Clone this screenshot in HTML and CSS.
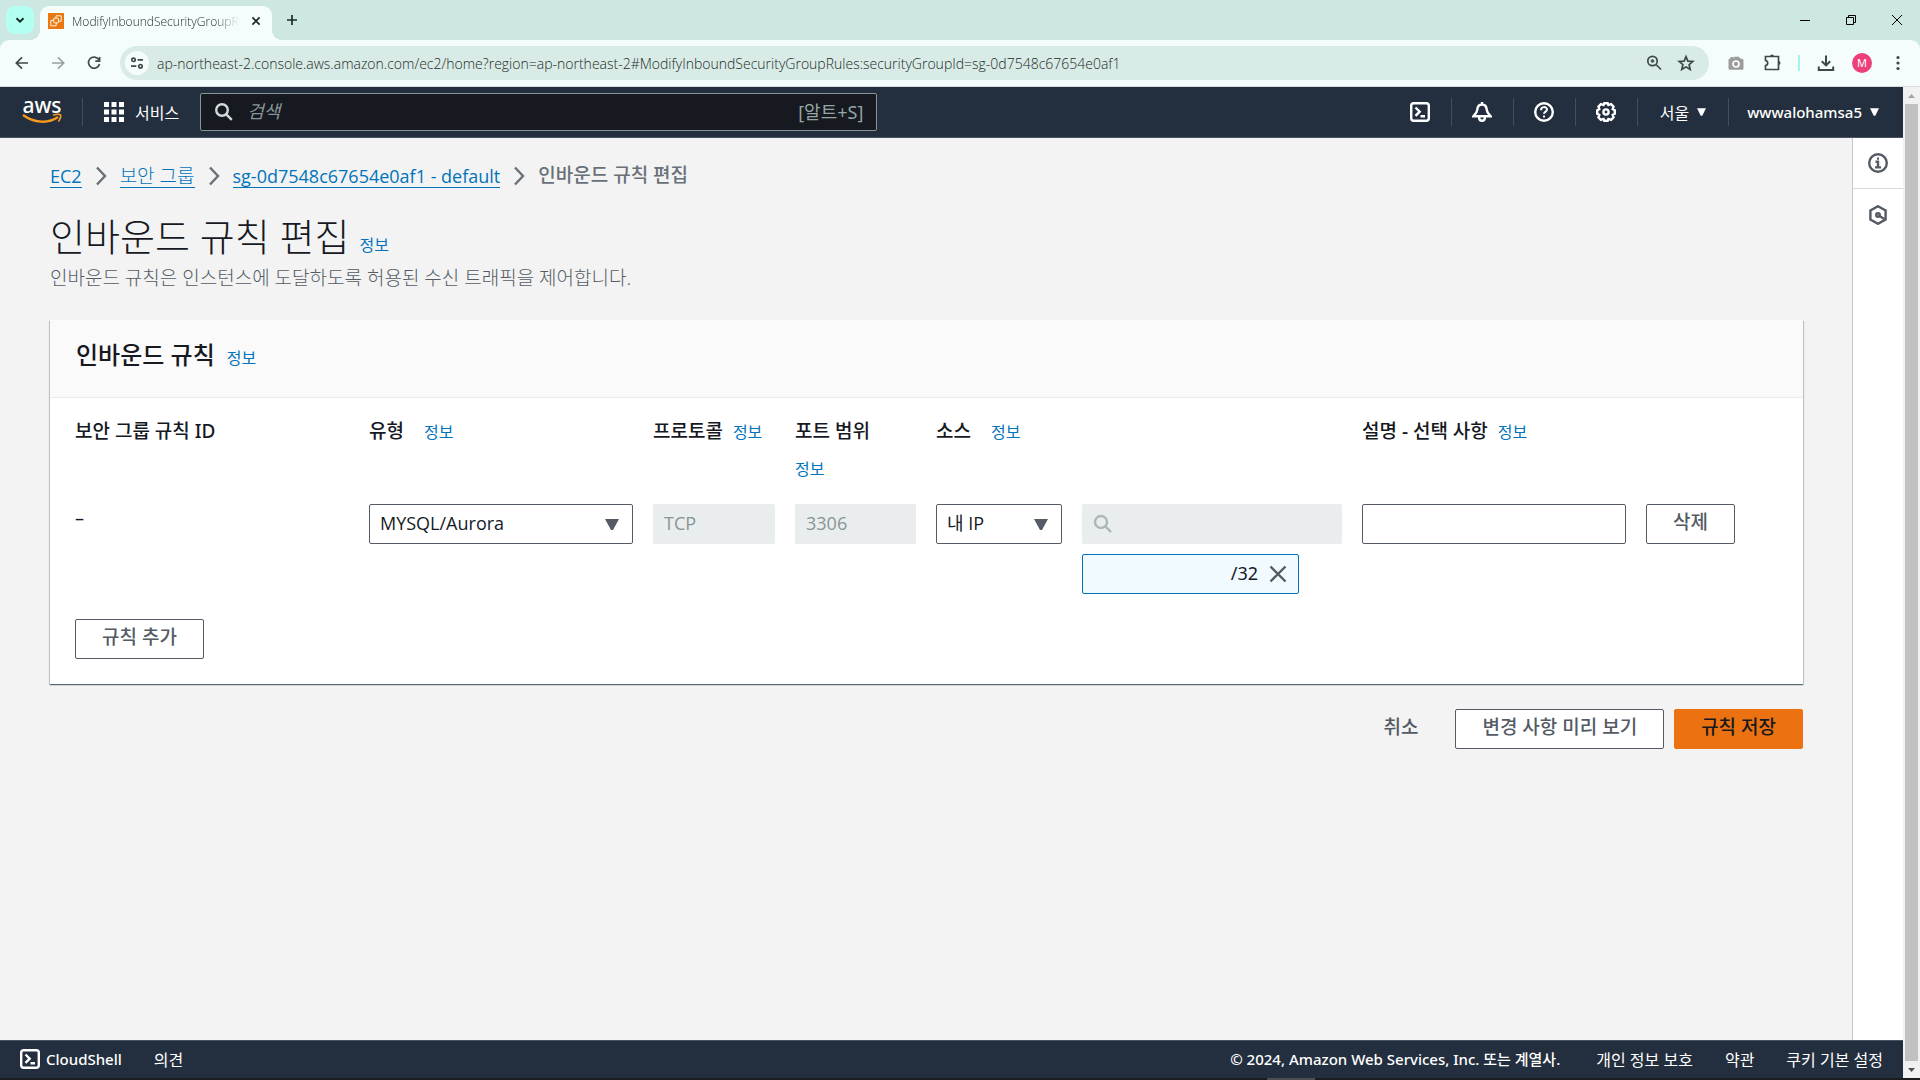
FILE: index.html
```html
<!DOCTYPE html>
<html lang="ko">
<head>
    <meta charset="UTF-8">
    <title>ModifyInboundSecurityGroupRules</title>
    <link rel="stylesheet" href="styles.css">
</head>
<body>
<div class="tabstrip">
    <button class="tab_search" aria-label="탭 검색">
        <svg class="icon_sm" viewBox="0 0 16 16"><path d="M4.5 6.2L8 9.7l3.5-3.5"></path></svg>
    </button>
    <div class="tab">
        <svg class="favicon" viewBox="0 0 16 16">
            <rect width="16" height="16" fill="#e8780f"></rect>
            <g fill="none" stroke="#fff" stroke-width=".9">
                <rect x="5.8" y="5.2" width="4.6" height="4.6" rx=".5"></rect>
                <path d="M8 5V2.8h5.2v5.4h-2.6M5.6 7.4H2.8v5.4h5.4V10"></path>
            </g>
        </svg>
        <span class="tab_title">ModifyInboundSecurityGroupR</span>
        <button class="tab_close" aria-label="닫기">
            <svg class="icon_sm" viewBox="0 0 16 16"><path d="M4.4 4.4l7.2 7.2M11.6 4.4l-7.2 7.2"></path></svg>
        </button>
    </div>
    <button class="tab_new" aria-label="새 탭">
        <svg class="icon_sm" viewBox="0 0 16 16"><path d="M8 3v10M3 8h10"></path></svg>
    </button>
    <div class="window_controls">
        <button aria-label="최소화"><svg viewBox="0 0 12 12"><path d="M1 6.5h10"></path></svg></button>
        <button aria-label="이전 크기로"><svg viewBox="0 0 12 12"><path d="M1.5 3.5h7v7h-7zM3.5 3.5v-2h7v7h-2"></path></svg></button>
        <button aria-label="창 닫기"><svg viewBox="0 0 12 12"><path d="M1 1l10 10M11 1L1 11"></path></svg></button>
    </div>
</div>

<div class="toolbar">
    <div class="toolbar_nav">
        <button aria-label="뒤로"><svg class="icon" viewBox="0 0 20 20"><path d="M16 10H4.5M10 4.3L4.3 10l5.7 5.7"></path></svg></button>
        <button class="disabled" aria-label="앞으로"><svg class="icon" viewBox="0 0 20 20"><path d="M4 10h11.500M10 4.300l5.700 5.700-5.700 5.700"></path></svg></button>
        <button aria-label="새로고침"><svg class="icon" viewBox="0 0 20 20"><path d="M14.800 6.600A5.600 5.600 0 1 0 15.500 11M15.600 4v4.200h-4.300"></path></svg></button>
    </div>
    <div class="address">
        <button class="site_info" aria-label="사이트 정보">
            <svg class="icon_sm" viewBox="0 0 16 16"><circle cx="4.500" cy="4.800" r="1.700"></circle><path d="M8.600 4.800H14M2 11.200h5.400"></path><circle cx="11.500" cy="11.200" r="1.700"></circle></svg>
        </button>
        <input class="url" type="text" aria-label="주소" value="ap-northeast-2.console.aws.amazon.com/ec2/home?region=ap-northeast-2#ModifyInboundSecurityGroupRules:securityGroupId=sg-0d7548c67654e0af1">
        <button aria-label="확대"><svg class="icon" viewBox="0 0 20 20"><circle cx="8.500" cy="8" r="4.700"></circle><path d="M12 11.500l5 5M6.700 8h3.600M8.500 6.200v3.600"></path></svg></button>
        <button aria-label="북마크"><svg class="icon" viewBox="0 0 20 20"><path d="M10 3.600l1.900 4.500 4.900.4-3.700 3.200 1.100 4.800L10 13.900l-4.200 2.600 1.100-4.800-3.700-3.200 4.900-.4z"></path></svg></button>
    </div>
    <div class="toolbar_actions">
        <button class="camera" aria-label="캡처"><svg class="icon" viewBox="0 0 20 20"><path fill="#9a9d9c" stroke="none" d="M4.500 5.500V4H7v1.500l1-1.700h5l1.300 2H16a1.500 1.500 0 0 1 1.500 1.500v8a1.500 1.500 0 0 1-1.500 1.500H4a1.500 1.500 0 0 1-1.500-1.500v-8A1.500 1.500 0 0 1 4 5.500z"></path><circle cx="10" cy="11" r="3" stroke="#fff"></circle></svg></button>
        <button aria-label="확장 프로그램"><svg class="icon" viewBox="0 0 20 20"><path d="M3.500 3.500h13v13h-13v-4c2.900-.2 2.900-4.800 0-5z"></path><path fill="#3b4a46" stroke="none" d="M8 3.500a2 2 0 0 1 4 0zM16.500 8a2 2 0 0 1 0 4z"></path></svg></button>
        <span class="toolbar_line"></span>
        <button aria-label="다운로드"><svg class="icon" viewBox="0 0 20 20"><path stroke-width="2" d="M10 2.500v9.700M5.800 8.200l4.200 4.200 4.200-4.200M2.800 13.500V17h14.400v-3.500"></path></svg></button>
        <button class="profile">M</button>
        <button class="more" aria-label="메뉴"><svg class="icon" viewBox="0 0 20 20"><g fill="#3b4a46" stroke="none"><circle cx="10" cy="4.500" r="1.600"></circle><circle cx="10" cy="10" r="1.600"></circle><circle cx="10" cy="15.500" r="1.600"></circle></g></svg></button>
    </div>
</div>

<div class="viewport">
    <div class="page">
        <header class="navbar">
            <a class="logo" href="#" aria-label="aws">
                <span class="logo_text">aws</span>
                <svg class="logo_smile" viewBox="0 0 40 10"><path d="M1 1c11 8 25 9 35 2" fill="none" stroke="#f79a1e" stroke-width="2.400"></path><path d="M31 1.200c3-1 6-1.200 7.300-.4.900 1.200 0 4.500-2 6.700" fill="none" stroke="#f79a1e" stroke-width="1.700"></path></svg>
            </a>
            <button class="services">
                <svg class="icon" viewBox="0 0 20 20"><path fill="#fff" stroke="none" d="M0 0h5v5H0zM7.500 0h5v5h-5zM15 0h5v5h-5zM0 7.500h5v5H0zM7.500 7.500h5v5h-5zM15 7.500h5v5h-5zM0 15h5v5H0zM7.500 15h5v5h-5zM15 15h5v5h-5z"></path></svg>
                서비스
            </button>
            <div class="search">
                <svg class="icon" viewBox="0 0 20 20"><circle cx="8" cy="8" r="5.800"></circle><path d="M12.300 12.300l5.500 5.500"></path></svg>
                <input type="search" placeholder="검색" aria-label="검색">
                <span class="shortcut">[알트+S]</span>
            </div>
            <div class="nav_right">
                <button class="nav_icon" aria-label="CloudShell"><svg class="icon" viewBox="0 0 20 20"><rect x="1.200" y="1.200" width="17.600" height="17.600" rx="2.500"></rect><path d="M5.500 5.500l4.200 4.200-4.200 4.200M10.500 14.200H15"></path></svg></button>
                <button class="nav_icon" aria-label="알림"><svg class="icon" viewBox="0 0 20 20"><path d="M10 0v3M10 2.500c-3.500 0-4.500 2.700-4.700 5.200-.2 2.500-1.400 4.300-3.800 6.500h17c-2.400-2.200-3.600-4-3.800-6.500C14.500 5.200 13.500 2.500 10 2.500zM7 15c0 5 6 5 6 0"></path></svg></button>
                <button class="nav_icon" aria-label="도움말"><svg class="icon" viewBox="0 0 20 20"><circle cx="10" cy="10" r="8.800"></circle><path stroke-width="2" d="M7 8.200c0-4 6-4 6-.6 0 2-3 2-3 4.200M10 13.400v2"></path></svg></button>
                <button class="nav_icon" aria-label="설정"><svg class="icon" viewBox="0 0 20 20"><path d="M8.300 1.200h3.400l.7 1.900 2.700-.9 2.400 2.400-.8 2.600 2.100 1.100v3.400l-2.100 1.100.8 2.600-2.400 2.400-2.700-.9-.7 1.900H8.300l-.7-1.900-2.700.9-2.400-2.400.8-2.600-2.100-1.100V8.300l2.100-1.100-.8-2.600 2.400-2.400 2.700.9z"></path><circle cx="10" cy="10" r="2.600"></circle></svg></button>
                <button class="nav_menu region">서울 <svg class="caret" viewBox="0 0 12 10"><path d="M0 0h12L7 10H5z"></path></svg></button>
                <button class="nav_menu">wwwalohamsa5 <svg class="caret" viewBox="0 0 12 10"><path d="M0 0h12L7 10H5z"></path></svg></button>
            </div>
        </header>

        <div class="body">
            <main class="content">
                <nav class="breadcrumb">
                    <a class="latin" href="#">EC2</a>
                    <svg class="chevron" viewBox="0 0 12 20"><path d="M2 1.500L10 10 2 18.500"></path></svg>
                    <a href="#">보안 그룹</a>
                    <svg class="chevron" viewBox="0 0 12 20"><path d="M2 1.500L10 10 2 18.500"></path></svg>
                    <a class="latin" href="#">sg-0d7548c67654e0af1 - default</a>
                    <svg class="chevron" viewBox="0 0 12 20"><path d="M2 1.500L10 10 2 18.500"></path></svg>
                    <span class="current">인바운드 규칙 편집</span>
                </nav>
                <div class="title">
                    <h1>인바운드 규칙 편집</h1>
                    <a class="info" href="#">정보</a>
                </div>
                <p class="description">인바운드 규칙은 인스턴스에 도달하도록 허용된 수신 트래픽을 제어합니다.</p>

                <section class="card">
                    <div class="card_header">
                        <h2>인바운드 규칙</h2>
                        <a class="info" href="#">정보</a>
                    </div>
                    <div class="card_body">
                        <div class="rules">
                            <div class="head">보안 그룹 규칙 ID</div>
                            <div class="head wide"><label for="type">유형</label> <a class="info" href="#">정보</a></div>
                            <div class="head"><label for="protocol">프로토콜</label> <a class="info" href="#">정보</a></div>
                            <div class="head stacked"><label for="port">포트 범위</label> <a class="info" href="#">정보</a></div>
                            <div class="head source wide"><label for="source">소스</label> <a class="info" href="#">정보</a></div>
                            <div class="head last"><label for="desc">설명 - 선택 사항</label> <a class="info" href="#">정보</a></div>

                            <div class="rule_id">–</div>
                            <select class="field" id="type"><option>MYSQL/Aurora</option></select>
                            <input class="field" id="protocol" type="text" value="TCP" disabled>
                            <input class="field" id="port" type="text" value="3306" disabled>
                            <select class="field" id="source"><option>내 IP</option></select>
                            <div class="ip">
                                <div class="ip_search">
                                    <svg class="icon" viewBox="0 0 20 20"><circle cx="8" cy="8" r="6"></circle><path d="M12.500 12.500l5.500 5.500"></path></svg>
                                    <input class="field" type="text" aria-label="소스 검색" disabled>
                                </div>
                                <div class="token">
                                    <span>/32</span>
                                    <button aria-label="제거"><svg class="icon" viewBox="0 0 20 20"><path d="M2.500 2.500l15 15M17.500 2.500l-15 15"></path></svg></button>
                                </div>
                            </div>
                            <input class="field" id="desc" type="text">
                            <button class="btn delete">삭제</button>
                        </div>
                        <button class="btn">규칙 추가</button>
                    </div>
                </section>

                <div class="actions">
                    <button class="btn link">취소</button>
                    <button class="btn">변경 사항 미리 보기</button>
                    <button class="btn primary">규칙 저장</button>
                </div>
            </main>
            <aside class="tools">
                <button aria-label="정보 패널"><svg class="icon" viewBox="0 0 20 20"><circle cx="10" cy="10" r="8.800"></circle><path d="M7.500 8.800H10v5M7 14.400h6M9 5.600h2"></path></svg></button>
                <button aria-label="진단"><svg class="icon" viewBox="0 0 20 20"><path d="M10 1.200l7.600 4.300v9L10 18.800l-7.600-4.300v-9z"></path><circle cx="10" cy="10" r="1.800"></circle><path d="M10.500 10.500l6 3.500"></path></svg></button>
            </aside>
        </div>

        <footer class="footer">
            <button class="cloudshell"><svg class="icon" viewBox="0 0 20 20"><rect x="1.200" y="1.200" width="17.600" height="17.600" rx="2.500"></rect><path d="M5.500 5.500l4.200 4.200-4.200 4.200M10.500 14.200H15"></path></svg>CloudShell</button>
            <a href="#">의견</a>
            <span class="copyright">© 2024, Amazon Web Services, Inc. 또는 계열사.</span>
            <a href="#">개인 정보 보호</a>
            <a href="#">약관</a>
            <a href="#">쿠키 기본 설정</a>
        </footer>
    </div>
    <div class="scrollbar">
        <svg class="arrow" viewBox="0 0 17 17"><path fill="#a3a3a3" d="M5 11h7L8.500 7z"></path></svg>
        <div class="thumb"></div>
        <svg class="arrow" viewBox="0 0 17 17"><path fill="#505050" d="M5 7h7l-3.500 4z"></path></svg>
    </div>
</div>
<div class="taskbar"><div class="taskbar_item"></div></div>
</body>
</html>
```
FILE: styles.css
```css
*{
    box-sizing: border-box;
}
body{
    margin: 0;
    height: 100vh;
    display: flex;
    flex-direction: column;
    overflow: hidden;
    font-family: "Noto Sans", "Noto Sans CJK KR", sans-serif;
    font-size: 18px;
    color: #16191f;
    background-color: #cde8e2;
}
button, input, select{
    font: inherit;
    color: inherit;
}
button{
    padding: 0;
    border: 0;
    background: none;
}
a{
    color: #0073bb;
    text-decoration: none;
}
h1, h2, p{
    margin: 0;
}
svg{
    display: block;
    flex: none;
}
.icon, .icon_sm{
    width: 20px;
    height: 20px;
    fill: none;
    stroke: currentColor;
    stroke-width: 2.4;
}
.icon_sm{
    width: 16px;
    height: 16px;
    stroke-width: 2;
}

/* browser */
.tabstrip{
    display: flex;
    align-items: center;
    height: 40px;
    flex: none;
    padding-left: 6px;
    color: #1c2b28;
}
.tab_search{
    display: flex;
    align-items: center;
    justify-content: center;
    width: 28px;
    height: 28px;
    border-radius: 9px;
    background-color: #b3fff0;
}
.tab{
    position: relative;
    display: flex;
    align-items: center;
    align-self: flex-end;
    gap: 8px;
    width: 232px;
    height: 34px;
    margin-left: 6px;
    padding: 0 8px 4px;
    border-radius: 9px 9px 0 0;
    background-color: #f4fdfb;
}
.tab::before, .tab::after{
    content: "";
    position: absolute;
    bottom: 0;
    left: -10px;
    width: 10px;
    height: 10px;
    background: radial-gradient(circle at 0 0, transparent 10px, #f4fdfb 10px);
}
.tab::after{
    left: 100%;
    background: radial-gradient(circle at 100% 0, transparent 10px, #f4fdfb 10px);
}
.favicon{
    width: 16px;
    height: 16px;
}
.tab_title{
    flex: 1;
    min-width: 0;
    overflow: hidden;
    white-space: nowrap;
    font-family: "Open Sans", sans-serif;
    font-size: 12px;
    font-weight: 300;
    -webkit-mask-image: linear-gradient(to right, #000 85%, transparent);
    mask-image: linear-gradient(to right, #000 85%, transparent);
}
.tab_close .icon_sm, .tab_new .icon_sm{
    stroke-width: 1.7;
}
.tab_new{
    margin-left: 12px;
}
.window_controls{
    display: flex;
    margin-left: auto;
}
.window_controls button{
    display: flex;
    justify-content: center;
    width: 46px;
}
.window_controls svg{
    width: 12px;
    height: 12px;
    fill: none;
    stroke: #000;
}
.toolbar{
    display: flex;
    align-items: center;
    height: 47px;
    flex: none;
    padding: 0 12px;
    border-bottom: 1px solid #d5dcdb;
    border-radius: 9px 9px 0 0;
    background-color: #f4fdfb;
    color: #3b4a46;
}
.toolbar .icon, .toolbar .icon_sm{
    stroke-width: 1.7;
}
.toolbar_nav{
    display: flex;
    gap: 16px;
    padding-right: 16px;
}
.disabled{
    opacity: .5;
}
.address{
    display: flex;
    align-items: center;
    flex: 1;
    gap: 12px;
    height: 34px;
    padding: 0 13px 0 5px;
    border-radius: 17px;
    background-color: #d9ebe6;
}
.site_info{
    display: flex;
    align-items: center;
    justify-content: center;
    width: 24px;
    height: 24px;
    border-radius: 50%;
    background-color: #f4fdfb;
}
.url{
    flex: 1;
    min-width: 0;
    margin-left: -4px;
    padding: 0;
    border: 0;
    outline: 0;
    background: none;
    color: #1c2b28;
    font-family: "Open Sans", sans-serif;
    font-size: 14px;
    font-weight: 300;
}
.toolbar_actions{
    display: flex;
    align-items: center;
    gap: 16px;
    padding-left: 17px;
}
.toolbar_line{
    width: 2px;
    height: 16px;
    background-color: #a5f3ea;
}
.profile{
    width: 20px;
    height: 20px;
    border-radius: 50%;
    background-color: #ec407a;
    color: #fff;
    font-size: 11px;
    line-height: 20px;
}

/* page */
.viewport{
    display: flex;
    flex: 1;
    min-height: 0;
    background-color: #f3f3f3;
}
.page{
    display: flex;
    flex-direction: column;
    flex: 1;
    min-width: 0;
}
.navbar{
    display: flex;
    align-items: center;
    height: 51px;
    flex: none;
    padding-left: 22px;
    border-bottom: 1px solid #4a5360;
    background-color: #232f3e;
    color: #fff;
    font-size: 16px;
}
.logo{
    display: flex;
    flex-direction: column;
    align-items: center;
    width: 40px;
    padding-bottom: 2px;
    color: #fff;
}
.logo_text{
    font-size: 21px;
    font-weight: 500;
    line-height: 16px;
}
.logo_smile{
    width: 40px;
    height: 12px;
}
.services{
    display: flex;
    align-items: center;
    gap: 11px;
    height: 28px;
    margin-left: 20px;
    padding: 0 21px;
    border-left: 1px solid #414d5c;
}
.search{
    display: flex;
    align-items: center;
    gap: 13px;
    width: 36%;
    height: 38px;
    padding: 0 13px;
    border: 1px solid #879596;
    border-radius: 2px;
    background-color: #16191f;
    color: #d5dbdb;
    font-size: 18px;
}
.search input{
    flex: 1;
    min-width: 0;
    padding: 0 0 2px;
    border: 0;
    outline: 0;
    background: none;
}
.search input::placeholder{
    color: #879596;
    font-style: italic;
}
.shortcut{
    padding-bottom: 2px;
    color: #95a5a6;
}
.nav_right{
    display: flex;
    margin-left: auto;
}
.nav_icon, .nav_menu{
    display: flex;
    align-items: center;
    justify-content: center;
    height: 28px;
    border-right: 1px solid #414d5c;
}
.nav_icon{
    width: 62px;
}
.nav_menu{
    gap: 8px;
    padding: 0 24px 0 18px;
    font-size: 15px;
    font-weight: 500;
}
.nav_menu:last-child{
    border: 0;
}
.region{
    padding: 0 22px;
    font-size: 16px;
    font-weight: 400;
}
.caret{
    width: 9px;
    height: 8px;
    fill: #fff;
}
.body{
    display: flex;
    flex: 1;
    min-height: 0;
}
.content{
    flex: 1;
    min-width: 0;
    padding: 20px 49px 0 50px;
}
.breadcrumb{
    display: flex;
    align-items: center;
    gap: 13px;
    height: 36px;
    font-size: 19px;
}
.breadcrumb a{
    border-bottom: 1px solid #0073bb;
    font-weight: 300;
    line-height: 22px;
}
.breadcrumb .latin{
    font-family: "Open Sans", sans-serif;
    font-size: 18px;
    font-weight: 400;
}
.chevron{
    width: 12px;
    height: 20px;
    fill: none;
    stroke: #687078;
    stroke-width: 2.4;
}
.breadcrumb .current{
    padding-bottom: 4px;
    color: #687078;
    font-weight: 500;
}
.title{
    display: flex;
    align-items: baseline;
    gap: 10px;
    margin-top: 14px;
}
h1{
    font-size: 38px;
    font-weight: 300;
    line-height: 56px;
}
.info{
    font-size: 16px;
    font-weight: 400;
}
.description{
    color: #545b64;
    font-size: 19px;
    font-weight: 300;
    line-height: 28px;
}
.card{
    margin-top: 28px;
    background-color: #fff;
    box-shadow: 0 1px 1px rgba(0, 28, 36, .5), 1px 1px 1px rgba(0, 28, 36, .15), -1px 1px 1px rgba(0, 28, 36, .15);
}
.card_header{
    display: flex;
    align-items: baseline;
    gap: 12px;
    height: 78px;
    padding: 16px 26px;
    border-bottom: 1px solid #eaeded;
    background-color: #fafafa;
}
h2{
    font-size: 24px;
    font-weight: 500;
    line-height: 38px;
}
.card_body{
    padding: 14px 25px 25px;
}
.rules{
    display: grid;
    grid-template-columns: 274fr 264fr 122fr 121fr 126fr 260fr 264fr 132fr;
    column-gap: 20px;
    align-items: start;
    margin-bottom: 25px;
}
.head{
    min-width: 0;
    padding-bottom: 16px;
    font-weight: 500;
    line-height: 38px;
    font-size: 19px;
}
.head .info{
    margin-left: 5px;
    white-space: nowrap;
}
.head.wide .info{
    margin-left: 15px;
}
.head.stacked .info{
    display: block;
    margin-left: 0;
}
.source{
    grid-column: span 2;
}
.last{
    grid-column: span 2;
}
.rule_id{
    line-height: 28px;
}
.field{
    width: 100%;
    min-width: 0;
    height: 40px;
    padding: 0 10px 2px;
    border: 1px solid #545b64;
    border-radius: 2px;
    background-color: #fff;
    font-family: "Open Sans", "Noto Sans CJK KR", sans-serif;
}
select.field{
    appearance: none;
    background-image: url("data:image/svg+xml,%3Csvg xmlns='http://www.w3.org/2000/svg' viewBox='0 0 14 11'%3E%3Cpath fill='%23545b64' d='M0 0h14L8 11H6z'/%3E%3C/svg%3E");
    background-repeat: no-repeat;
    background-position: right 13px center;
    background-size: 14px 11px;
}
.field:disabled{
    border-color: #eaeded;
    background-color: #eaeded;
    color: #879596;
}
.ip_search{
    display: grid;
    align-items: center;
}
.ip_search .icon, .ip_search .field{
    grid-area: 1 / 1;
}
.ip_search .icon{
    z-index: 1;
    margin-left: 11px;
    color: #aab7b8;
}
.token{
    display: flex;
    align-items: center;
    justify-content: flex-end;
    gap: 10px;
    width: 217px;
    height: 40px;
    margin-top: 10px;
    padding: 0 10px;
    border: 1px solid #0073bb;
    border-radius: 2px;
    background-color: #f1faff;
}
.token span{
    padding-bottom: 2px;
}
.token button{
    color: #545b64;
}
.btn{
    height: 40px;
    padding: 0 26px 4px;
    border: 1px solid #545b64;
    border-radius: 2px;
    background-color: #fff;
    color: #545b64;
    font-size: 19px;
    font-weight: 500;
    line-height: 34px;
}
.delete{
    justify-self: start;
}
.actions{
    display: flex;
    justify-content: flex-end;
    gap: 10px;
    margin-top: 25px;
}
.link{
    border-color: transparent;
    background: none;
}
.primary{
    border-color: #ec7211;
    background-color: #ec7211;
    color: #16191f;
}
.tools{
    width: 51px;
    border-left: 1px solid #c3c8cc;
    background-color: #fff;
    color: #545b64;
}
.tools button{
    display: flex;
    align-items: center;
    justify-content: center;
    width: 100%;
    height: 51px;
}
.tools button:first-child{
    border-bottom: 1px solid #d5dbdb;
}
.footer{
    display: flex;
    align-items: center;
    gap: 32px;
    height: 38px;
    flex: none;
    padding: 0 20px 2px;
    border-top: 1px solid #4a5360;
    background-color: #232f3e;
    color: #fff;
    font-size: 16px;
}
.footer a{
    color: #fff;
}
.cloudshell{
    display: flex;
    align-items: center;
    gap: 6px;
    font-size: 15px;
    font-weight: 500;
}
.copyright{
    margin-left: auto;
    padding-right: 4px;
    font-size: 15px;
    font-weight: 500;
}
.scrollbar{
    display: flex;
    flex-direction: column;
    width: 17px;
    background-color: #f1f1f1;
}
.arrow{
    width: 17px;
    height: 17px;
}
.thumb{
    flex: 1;
    margin: 0 2px;
    background-color: #c1c1c1;
}
.taskbar{
    height: 2px;
    flex: none;
    background-color: #1b1c20;
}
.taskbar_item{
    width: 48px;
    height: 2px;
    margin-left: 66%;
    background-color: #4c4d50;
}
```
